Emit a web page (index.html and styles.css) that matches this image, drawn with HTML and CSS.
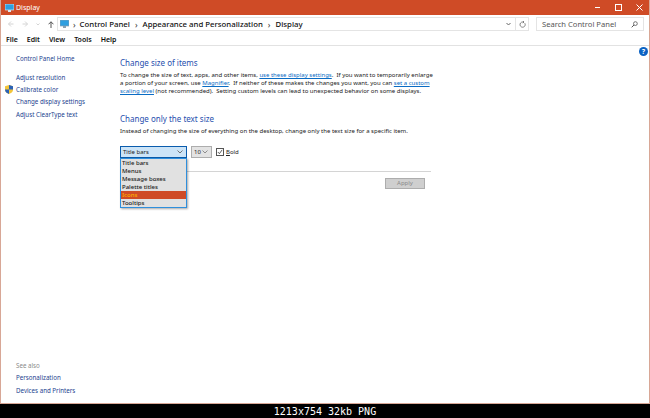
FILE: index.html
```html
<!DOCTYPE html>
<html lang="en">
<head>
  <meta charset="UTF-8" />
  <title>Display</title>
  <link rel="stylesheet" href="styles.css">
</head>
<body>
  <div class="window">
    <div class="titlebar">
      <svg class="monitor" width="9" height="8" viewBox="0 0 9 8">
        <rect x="0" y="0" width="9" height="6" fill="#2f9fe0" stroke="#d8e8f0" stroke-width="0.7" />
        <rect x="3" y="6" width="3" height="2" fill="#d8e8f0" />
      </svg>
      <span class="title">Display</span>
      <div class="caption-buttons">
        <svg width="7" height="7" viewBox="0 0 7 7"><path d="M1 3.5h5" stroke="#fff" /></svg>
        <svg width="7" height="7" viewBox="0 0 7 7"><rect x="0.5" y="0.5" width="6" height="6" fill="none" stroke="#fff" /></svg>
        <svg width="7" height="7" viewBox="0 0 7 7"><path d="M0.5 0.5l6 6M6.5 0.5l-6 6" stroke="#fff" /></svg>
      </div>
    </div>

    <div class="navbar">
      <div class="nav-buttons">
        <svg width="6" height="6" viewBox="0 0 6 6"><path d="M5.500 3h-5M3 .5L.5 3 3 5.500" fill="none" stroke="#d4d4d4" /></svg>
        <svg width="6" height="6" viewBox="0 0 6 6"><path d="M.5 3h5M3 .5L5.500 3 3 5.500" fill="none" stroke="#d4d4d4" /></svg>
        <svg width="4" height="3" viewBox="0 0 4 3"><path d="M.5 .5L2 2 3.500 .5" fill="none" stroke="#d4d4d4" /></svg>
        <svg width="6" height="7" viewBox="0 0 6 7"><path d="M3 7V.8M.5 3.300L3 .8l2.500 2.500" fill="none" stroke="#555" /></svg>
      </div>
      <div class="address">
        <svg class="monitor" width="9" height="8" viewBox="0 0 9 8">
          <rect x="0" y="0" width="9" height="6" fill="#2f9fe0" stroke="#8aa0b0" stroke-width="0.7" />
          <rect x="3" y="6" width="3" height="2" fill="#8aa0b0" />
        </svg>
        <span class="crumb-sep">›</span>
        <span class="crumb">Control Panel</span>
        <span class="crumb-sep">›</span>
        <span class="crumb">Appearance and Personalization</span>
        <span class="crumb-sep">›</span>
        <span class="crumb">Display</span>
        <span class="address-end">
          <svg width="5" height="4" viewBox="0 0 5 4"><path d="M.5 1l2 2 2-2" fill="none" stroke="#666" /></svg>
          <svg class="refresh" width="7" height="7" viewBox="0 0 7 7"><path d="M5.8 2.2A2.6 2.6 0 1 1 3.5 1H5M3.8 0l1.2 1-1.2 1" fill="none" stroke="#666" stroke-width="0.8" /></svg>
        </span>
      </div>
      <div class="search">
        <span>Search Control Panel</span>
        <svg width="7" height="7" viewBox="0 0 7 7"><circle cx="4.4" cy="2.6" r="1.9" fill="none" stroke="#555" stroke-width="0.8" /><path d="M3 4L.7 6.3" stroke="#555" /></svg>
      </div>
    </div>

    <div class="menubar">
      <span>File</span>
      <span>Edit</span>
      <span>View</span>
      <span>Tools</span>
      <span>Help</span>
    </div>

    <div class="content">
      <div class="sidebar">
        <div class="side-top">
          <a class="side-home">Control Panel Home</a>
          <a>Adjust resolution</a>
          <a class="with-shield">
            <svg class="shield" width="8" height="9" viewBox="0 0 8 9">
              <path d="M4 0L8 1.200V5C8 7 6 8.300 4 9 2 8.300 0 7 0 5V1.200z" fill="#f3c53a" />
              <path d="M4 0L8 1.200V4.500H4zM4 4.500V9C2 8.300 0 7 0 4.500z" fill="#2a62b8" />
            </svg>
            Calibrate color
          </a>
          <a>Change display settings</a>
          <a>Adjust ClearType text</a>
        </div>
        <div class="side-bottom">
          <span class="see-also">See also</span>
          <a>Personalization</a>
          <a>Devices and Printers</a>
        </div>
      </div>

      <div class="main">
        <div class="help">?</div>
        <h2>Change size of items</h2>
        <p>To change the size of text, apps, and other items, <a>use these display settings</a>.&nbsp; If you want to temporarily enlarge<br>a portion of your screen, use <a>Magnifier</a>.&nbsp; If neither of these makes the changes you want, you can <a>set a custom<br>scaling level</a> (not recommended).&nbsp; Setting custom levels can lead to unexpected behavior on some displays.</p>
        <h2 class="second">Change only the text size</h2>
        <p>Instead of changing the size of everything on the desktop, change only the text size for a specific item.</p>

        <div class="controls">
          <div class="combo-wrap">
            <div class="combo open">
              <span>Title bars</span>
              <svg width="6" height="4" viewBox="0 0 6 4"><path d="M.5 .5L3 3 5.500 .5" fill="none" stroke="#555" stroke-width="0.8" /></svg>
            </div>
            <ul class="dropdown">
              <li>Title bars</li>
              <li>Menus</li>
              <li>Message boxes</li>
              <li>Palette titles</li>
              <li class="selected">Icons</li>
              <li>Tooltips</li>
            </ul>
          </div>
          <div class="combo size">
            <span>10</span>
            <svg width="6" height="4" viewBox="0 0 6 4"><path d="M.5 .5L3 3 5.500 .5" fill="none" stroke="#777" stroke-width="0.8" /></svg>
          </div>
          <label class="bold-check">
            <span class="checkbox">
              <svg width="6" height="6" viewBox="0 0 7 7"><path d="M1 3.500L2.800 5.500 6 1" fill="none" stroke="#333" stroke-width="0.9" /></svg>
            </span>
            <span><u>B</u>old</span>
          </label>
        </div>

        <div class="divider"></div>
        <div class="actions">
          <button disabled>Apply</button>
        </div>
      </div>
    </div>
  </div>
  <div class="infobar">1213x754 32kb PNG</div>
</body>
</html>
```

FILE: styles.css
```css
html, body {
  margin: 0;
  padding: 0;
}

body {
  width: 650px;
  height: 418px;
  display: flex;
  flex-direction: column;
  overflow: hidden;
  font-family: "Noto Sans", "Open Sans", sans-serif;
  font-size: 6px;
  color: #222;
  background-color: #000;
}

.window {
  height: 404px;
  box-sizing: border-box;
  display: flex;
  flex-direction: column;
  background-color: #fff;
  border: 1px solid #d8a796;
  border-top: none;
}

.titlebar {
  height: 15px;
  flex-shrink: 0;
  display: flex;
  align-items: center;
  padding: 0 0 0 4px;
  background-color: #cf4b26;
  color: #fff;
}

.title {
  margin-left: 2px;
  font-size: 7px;
}

.caption-buttons {
  margin-left: auto;
  margin-right: 6px;
  display: flex;
  gap: 14px;
}

.navbar {
  height: 18px;
  flex-shrink: 0;
  display: flex;
  align-items: center;
  background-color: #fff;
}

.nav-buttons {
  width: 56px;
  padding-left: 7px;
  box-sizing: border-box;
  display: flex;
  align-items: center;
  gap: 8px;
}

.address {
  width: 472px;
  height: 14px;
  box-sizing: border-box;
  display: flex;
  align-items: center;
  gap: 4px;
  padding-left: 2px;
  border: 1px solid #e4e4e4;
  font-size: 7.800px;
  font-weight: 500;
  color: #111;
}

.crumb-sep {
  font-size: 8px;
  color: #444;
}

.crumb + .crumb-sep {
  margin: 0 1px;
}

.address-end {
  margin-left: auto;
  height: 100%;
  display: flex;
  align-items: center;
  gap: 4px;
  padding-right: 2px;
}

.refresh {
  border-left: 1px solid #e4e4e4;
  padding: 3px 0 3px 3px;
}

.search {
  width: 108px;
  height: 14px;
  margin-left: 7px;
  box-sizing: border-box;
  display: flex;
  align-items: center;
  justify-content: space-between;
  padding: 0 5px;
  border: 1px solid #e4e4e4;
  font-size: 7.600px;
  color: #555;
}

.menubar {
  height: 12px;
  flex-shrink: 0;
  display: flex;
  align-items: center;
  gap: 9px;
  padding-left: 5px;
  border-bottom: 1px solid #e2e2e2;
  font-size: 7px;
  font-weight: 600;
  color: #111;
}

.content {
  flex: 1;
  display: flex;
  min-height: 0;
}

.sidebar {
  width: 119px;
  flex-shrink: 0;
  box-sizing: border-box;
  padding: 7px 0 6px 15px;
  display: flex;
  flex-direction: column;
  justify-content: space-between;
  font-size: 6.200px;
}

.sidebar a,
.see-also {
  display: block;
  height: 12.300px;
  line-height: 12px;
  color: #1d3f8f;
}

.side-home {
  margin-bottom: 6.500px;
}

.with-shield {
  position: relative;
}

.shield {
  position: absolute;
  left: -11px;
  top: 1px;
}

.see-also {
  color: #8a8a8a;
}

.main {
  flex: 1;
  position: relative;
  padding: 11px 0 0 0;
}

.help {
  position: absolute;
  right: 1px;
  top: 1px;
  width: 9px;
  height: 9px;
  border-radius: 50%;
  background-color: #0b63c4;
  color: #fff;
  font-size: 7px;
  font-weight: bold;
  line-height: 9px;
  text-align: center;
}

h2 {
  margin: 0 0 3px;
  font-size: 8px;
  font-weight: 400;
  line-height: 11px;
  color: #1f4fae;
}

h2.second {
  margin-top: 17px;
}

p {
  margin: 0;
  font-size: 6px;
  line-height: 8.200px;
  color: #1a1a1a;
}

p a {
  color: #0a6cc4;
  text-decoration: underline;
}

.controls {
  margin-top: 11px;
  display: flex;
  align-items: center;
  gap: 4px;
}

.combo-wrap {
  position: relative;
}

.combo {
  width: 67px;
  height: 12px;
  box-sizing: border-box;
  display: flex;
  align-items: center;
  justify-content: space-between;
  padding: 0 3px 0 2px;
  border: 1px solid #adadad;
  background-color: #e3e3e3;
  color: #222;
}

.combo.open {
  border-color: #0a5cad;
  background-color: #cce4f7;
}

.combo.size {
  width: 21px;
  color: #222;
}

.dropdown {
  position: absolute;
  left: 0;
  top: 12px;
  width: 67px;
  box-sizing: border-box;
  margin: 0;
  padding: 0;
  list-style: none;
  background-color: #e1e1e1;
  border: 1px solid #2f8fdc;
  box-shadow: 1px 1px 2px rgba(0, 0, 0, 0.35);
}

.dropdown li {
  height: 8px;
  line-height: 8px;
  padding-left: 1px;
  font-weight: 500;
  color: #1a1a1a;
}

.dropdown li.selected {
  background-color: #cf4b26;
  color: #ffb000;
}

.bold-check {
  display: flex;
  align-items: center;
  gap: 2px;
}

.checkbox {
  width: 6px;
  height: 6px;
  display: flex;
  align-items: center;
  justify-content: center;
  border: 1px solid #555;
  background-color: #fff;
}

.divider {
  width: 311px;
  height: 1px;
  margin-top: 13px;
  background-color: #d4d4d4;
}

.actions {
  width: 305px;
  margin-top: 6px;
  display: flex;
  justify-content: flex-end;
}

.actions button {
  width: 40px;
  height: 11px;
  padding: 0;
  border: 1px solid #adadad;
  background-color: #cfcfcf;
  color: #8a8a8a;
  font-family: inherit;
  font-size: 6px;
  line-height: 9px;
}

.infobar {
  height: 14px;
  display: flex;
  align-items: center;
  justify-content: center;
  font-family: "DejaVu Sans Mono", monospace;
  font-size: 10px;
  color: #fff;
  background-color: #000;
}
```
